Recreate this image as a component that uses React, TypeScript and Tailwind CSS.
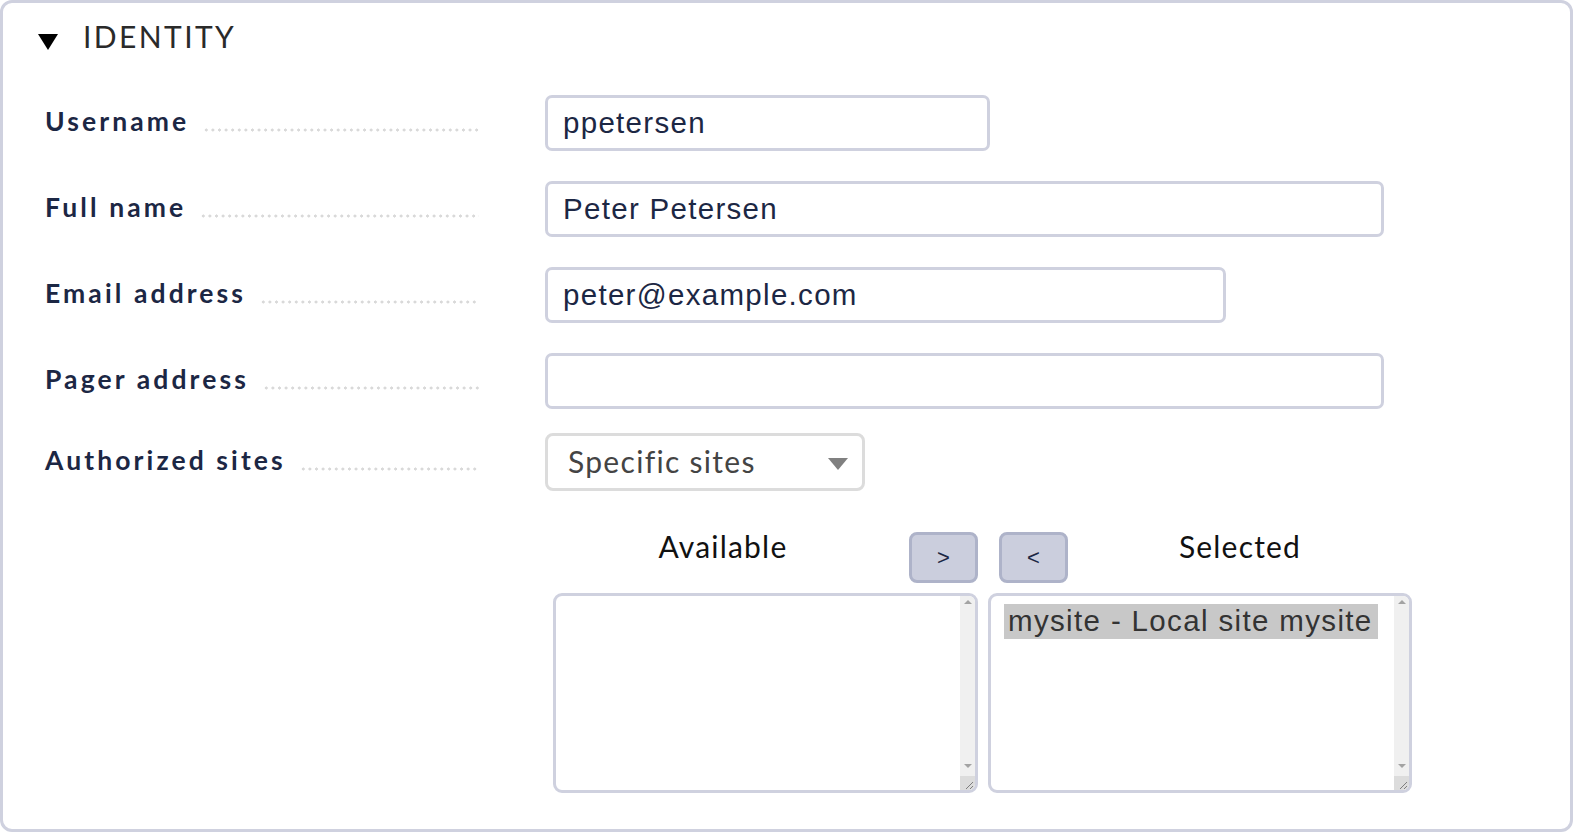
import React from "react";

const dots =
  "flex-1 h-[4px] bg-[radial-gradient(circle,#d9d9d9_1.4px,transparent_1.7px)] bg-[length:6.6px_4px] bg-repeat-x";

function Row({
  label,
  children,
  mt,
}: {
  label: string;
  children: React.ReactNode;
  mt: string;
}) {
  return (
    <div className={`flex items-center ${mt}`}>
      <div className="w-[434px] flex items-end pb-[5px]">
        <span className="font-['Lato',sans-serif] font-bold text-[26.5px] leading-[30px] tracking-[3.1px] text-[#1c2744] whitespace-nowrap">
          {label}
        </span>
        <span className={`${dots} ml-[14px] mb-[4px]`} />
      </div>
      <div className="ml-[66px]">{children}</div>
    </div>
  );
}

function TextBox({ w, value }: { w: string; value: string }) {
  return (
    <div
      className={`${w} h-[56px] border-[3px] border-[#cfd1df] rounded-[7px] bg-white flex items-center pl-[15px] font-['Liberation_Sans',Arial,sans-serif] text-[29.5px] tracking-[1.3px] text-[#1c2744]`}
    >
      {value}
    </div>
  );
}

function ScrollBar() {
  return (
    <div className="absolute right-0 top-0 bottom-0 w-[15px] bg-[#f0f0f0] flex flex-col items-center">
      <div className="mt-[4px] w-0 h-0 border-l-[4px] border-r-[4px] border-b-[4px] border-l-transparent border-r-transparent border-b-[#a3a3a3]" />
      <div className="flex-1" />
      <div className="mb-[8px] w-0 h-0 border-l-[4px] border-r-[4px] border-t-[4px] border-l-transparent border-r-transparent border-t-[#a3a3a3]" />
      <div className="w-[15px] h-[14px] bg-[#dcdcdc] relative">
        <svg width="15" height="14" viewBox="0 0 15 14" className="absolute inset-0">
          <line x1="6" y1="13" x2="13" y2="6" stroke="#666" strokeWidth="0.8" />
          <line x1="10" y1="13" x2="13" y2="10" stroke="#666" strokeWidth="0.8" />
        </svg>
      </div>
    </div>
  );
}

function Button({ label }: { label: string }) {
  return (
    <div className="w-[69px] h-[51px] bg-[#cbcedd] border-[3px] border-[#aeb3c9] rounded-[8px] flex items-center justify-center font-['Liberation_Sans',Arial,sans-serif] text-[22px] text-[#1c2744]">
      {label}
    </div>
  );
}

export default function App() {
  return (
    <div className="w-[1575px] h-[833px] bg-white p-0 m-0">
      <div className="w-[1573px] h-[832px] border-[3px] border-[#cfd1df] rounded-[12px] bg-white pl-[42px] pt-[15px]">
        {/* header */}
        <div className="flex items-center h-[36px]">
          <svg width="22" height="18" viewBox="0 0 22 18" className="-ml-[8px] mt-[12px]">
            <polygon points="1,1 21,1 11,17" fill="#000" />
          </svg>
          <span className="ml-[24px] font-['Lato',sans-serif] text-[30px] tracking-[2.4px] text-[#2a2a2a] leading-[36px]">
            IDENTITY
          </span>
        </div>

        <Row label="Username" mt="mt-[41px]">
          <TextBox w="w-[445px]" value="ppetersen" />
        </Row>
        <Row label="Full name" mt="mt-[30px]">
          <TextBox w="w-[839px]" value="Peter Petersen" />
        </Row>
        <Row label="Email address" mt="mt-[30px]">
          <TextBox w="w-[681px]" value="peter@example.com" />
        </Row>
        <Row label="Pager address" mt="mt-[30px]">
          <TextBox w="w-[839px]" value="" />
        </Row>
        <Row label="Authorized sites" mt="mt-[24px]">
          <div className="w-[320px] h-[58px] border-[3px] border-[#dcdcdc] rounded-[8px] bg-white flex items-center pl-[20px] pr-[14px] font-['Lato',sans-serif] text-[30px] tracking-[1.3px] text-[#444]">
            <span className="flex-1 -mt-[2px]">Specific sites</span>
            <svg width="20" height="13" viewBox="0 0 20 13" className="mt-[4px]">
              <polygon points="0,0 20,0 10,12" fill="#808080" />
            </svg>
          </div>
        </Row>

        {/* dual list */}
        <div className="ml-[500px] mt-[41px]">
          <div className="flex">
            <div className="w-[425px] ml-[8px] flex items-start">
              <span className="flex-1 text-center pr-[16px] -mt-[3px] font-['Lato',sans-serif] text-[30px] tracking-[1.2px] text-[#111] leading-[34px]">
                Available
              </span>
              <Button label=">" />
            </div>
            <div className="w-[424px] ml-[10px] flex items-start">
              <div className="ml-[11px]">
                <Button label="<" />
              </div>
              <span className="flex-1 text-center -mt-[3px] font-['Lato',sans-serif] text-[30px] tracking-[1.2px] text-[#111] leading-[34px]">
                Selected
              </span>
            </div>
          </div>
          <div className="flex mt-[10px]">
            <div className="relative w-[425px] h-[200px] ml-[8px] border-[3px] border-[#cfd1df] rounded-[9px] bg-white overflow-hidden">
              <ScrollBar />
            </div>
            <div className="relative w-[424px] h-[200px] ml-[10px] border-[3px] border-[#cfd1df] rounded-[9px] bg-white overflow-hidden">
              <div className="mt-[8px] ml-[13px] w-[374px] h-[35px] bg-[#c8c8c8] flex items-center pl-[4px] font-['Liberation_Sans',Arial,sans-serif] text-[29.5px] tracking-[1.35px] text-[#333]">
                mysite - Local site mysite
              </div>
              <ScrollBar />
            </div>
          </div>
        </div>
      </div>
    </div>
  );
}
